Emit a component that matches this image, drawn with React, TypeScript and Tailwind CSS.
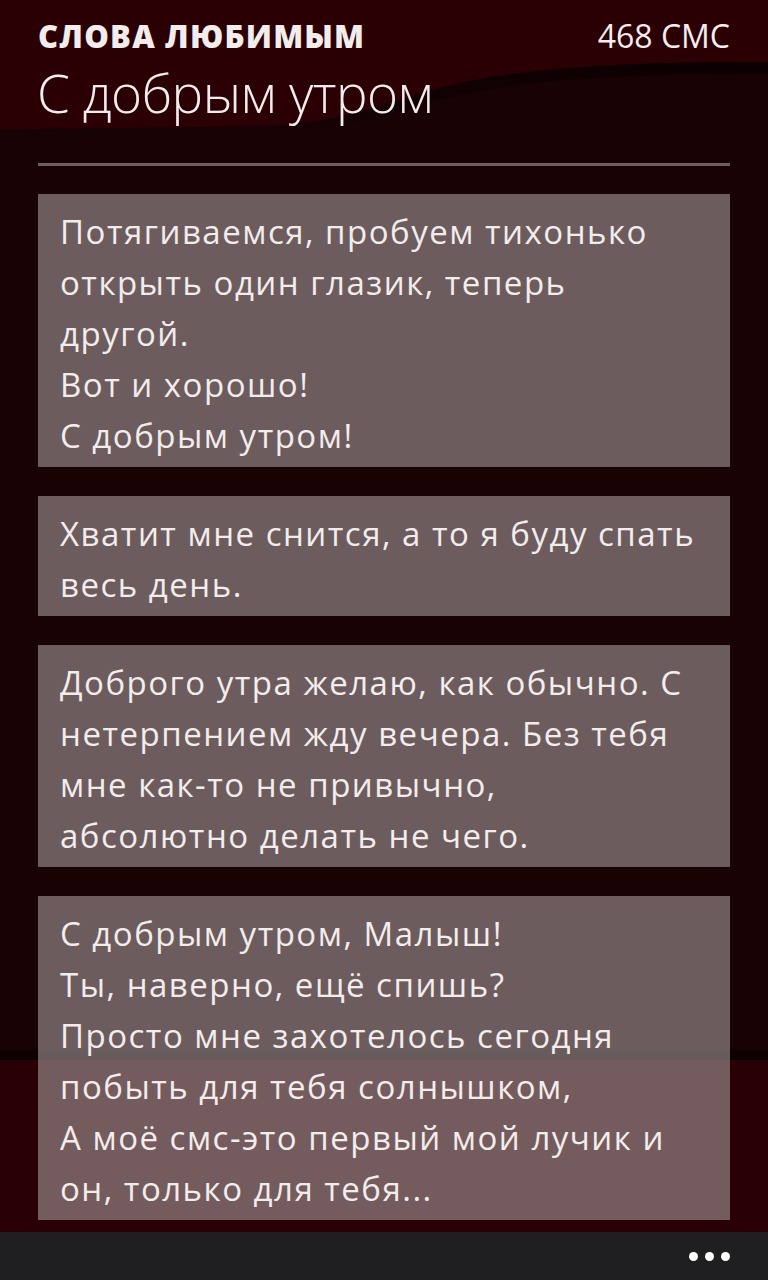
const messages: string[][] = [
  [
    "Потягиваемся, пробуем тихонько",
    "открыть один глазик, теперь",
    "другой.",
    "Вот и хорошо!",
    "С добрым утром!",
  ],
  ["Хватит мне снится, а то я буду спать", "весь день."],
  [
    "Доброго утра желаю, как обычно. С",
    "нетерпением жду вечера. Без тебя",
    "мне как-то не привычно,",
    "абсолютно делать не чего.",
  ],
  [
    "С добрым утром, Малыш!",
    "Ты, наверно, ещё спишь?",
    "Просто мне захотелось сегодня",
    "побыть для тебя солнышком,",
    "А моё смс-это первый мой лучик и",
    "он, только для тебя...",
  ],
];

function Backdrop() {
  return (
    <svg
      className="absolute inset-0 h-full w-full"
      viewBox="0 0 768 1280"
      preserveAspectRatio="none"
    >
      <defs>
        <linearGradient id="shade" x1="0" y1="0" x2="0" y2="1">
          <stop offset="0" stopColor="#0c0002" stopOpacity="0.9" />
          <stop offset="1" stopColor="#0c0002" stopOpacity="0" />
        </linearGradient>
      </defs>
      <rect width="768" height="1280" fill="#180204" />
      <path
        d="M0 0 H768 V62 C640 62 520 66 440 88 C380 104 340 124 260 126 C160 128 60 128 0 130 Z"
        fill="#2a0005"
      />
      <path
        d="M768 62 C640 62 520 66 440 88 C380 104 340 124 260 126 C160 128 60 128 0 130 V142 C60 140 160 140 260 138 C340 136 380 116 440 100 C520 78 640 74 768 74 Z"
        fill="url(#shade)"
      />
      <rect y="1060" width="768" height="220" fill="#280005" />
      <rect y="1050" width="768" height="10" fill="#0c0002" opacity="0.8" />
    </svg>
  );
}

export default function App() {
  return (
    <div
      className="relative h-[1280px] w-full overflow-hidden text-[#f3ecec]"
      style={{ fontFamily: '"Open Sans", "Noto Sans", sans-serif' }}
    >
      <Backdrop />
      <div className="relative flex h-full flex-col">
        <div className="flex items-baseline justify-between px-[38px] pt-[15px]">
          <span className="text-[31px] font-extrabold leading-[42px] tracking-[1.2px]">
            СЛОВА ЛЮБИМЫМ
          </span>
          <span className="text-[32px] leading-[42px]">468 СМС</span>
        </div>
        <h1 className="px-[37px] pt-[4px] text-[53px] font-light leading-[64px] tracking-[-0.5px]">
          С добрым утром
        </h1>

        <div className="mx-[38px] mt-[38px] h-[3px] bg-[#6e5e5f]" />

        <div className="mt-[28px] flex flex-col gap-[29px] px-[38px]">
          {messages.map((lines, i) => (
            <div
              key={i}
              className="bg-[rgba(192,182,181,0.5)] px-[22px] pb-[6px] pt-[12px]"
            >
              {lines.map((l, j) => (
                <div
                  key={j}
                  className="whitespace-nowrap text-[33px] leading-[51px] tracking-[1.5px]"
                >
                  {l}
                </div>
              ))}
            </div>
          ))}
        </div>

        <div className="mt-auto flex h-[48px] items-center justify-end gap-[7px] bg-[#1f1e20] pr-[38px]">
          <span className="h-[9px] w-[9px] rounded-full bg-white" />
          <span className="h-[9px] w-[9px] rounded-full bg-white" />
          <span className="h-[9px] w-[9px] rounded-full bg-white" />
        </div>
      </div>
    </div>
  );
}
